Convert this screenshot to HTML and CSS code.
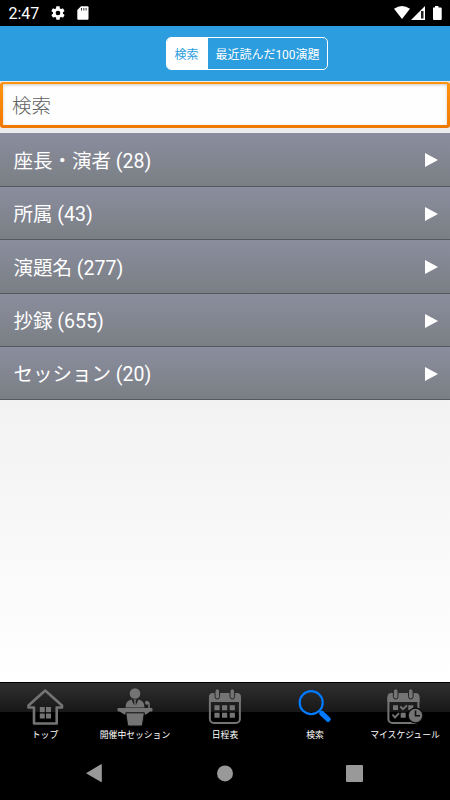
FILE: index.html
```html
<!DOCTYPE html>
<html lang="ja">
<head>
<meta charset="utf-8">
<title>検索</title>
<link rel="stylesheet" href="styles.css">
</head>
<body>
<div class="status">
  <span class="clock">2:47</span>
  <svg class="gear" width="16" height="16" viewBox="0 0 24 24"><path fill="#fff" fill-rule="evenodd" d="M19.4 13a7.5 7.5 0 0 0 0-2l2.1-1.6c.2-.2.3-.4.1-.7l-2-3.4c-.1-.2-.4-.3-.6-.2l-2.5 1a7 7 0 0 0-1.7-1l-.4-2.7c0-.2-.2-.4-.5-.4h-4c-.2 0-.4.2-.5.4L9 5.100a7 7 0 0 0-1.700 1l-2.500-1c-.2-.1-.5 0-.6.2l-2 3.400c-.1.3-.1.5.1.7L4.500 11a7.500 7.500 0 0 0 0 2l-2.100 1.600c-.2.2-.3.4-.1.7l2 3.400c.1.2.4.3.6.2l2.500-1a7 7 0 0 0 1.700 1l.4 2.700c0 .2.2.4.5.4h4c.2 0 .4-.2.5-.4l.4-2.700a7 7 0 0 0 1.700-1l2.500 1c.2.1.5 0 .6-.2l2-3.400c.1-.3.1-.5-.1-.7zM12 15.500a3.500 3.500 0 1 1 0-7 3.500 3.500 0 0 1 0 7z"/></svg>
  <svg class="card" width="12" height="14" viewBox="0 0 12 14"><path fill="#fff" d="M4 .2h6.500Q11.500.2 11.500 1.200v11.500q0 1-1 1h-9.200q-1 0-1-1V4z"/><path stroke="#000" stroke-width=".8" d="M4.500 2v2.500M6.800 2v2.500M9.100 2v2.500"/></svg>
  <svg class="signals" width="50" height="16" viewBox="0 0 50 16"><path fill="#fff" d="M0 3.800Q8 -1.800 16 3.800L8 14z"/><path fill="#fff" d="M31 1v14H17z"/><path fill="#222" d="M27 6h2.500v7.500H27z"/><path fill="#fff" d="M39 2.500h2V1h3.500v1.500h2.200q1 0 1 1V14q0 1-1 1H40q-1 0-1-1z"/></svg>
</div>
<header class="header">
  <div class="segments">
    <span class="segment selected">検索</span>
    <span class="segment">最近読んだ100演題</span>
  </div>
</header>
<div class="search"><div class="frame"><input type="text" placeholder="検索" aria-label="検索"></div></div>
<ul class="list">
  <li><span>座長・演者 (28)</span><i class="arrow"></i></li>
  <li><span>所属 (43)</span><i class="arrow"></i></li>
  <li><span>演題名 (277)</span><i class="arrow"></i></li>
  <li><span>抄録 (655)</span><i class="arrow"></i></li>
  <li><span>セッション (20)</span><i class="arrow"></i></li>
</ul>
<main class="blank"></main>
<nav class="tabs">
  <a class="tab">
    <svg width="40" height="40" viewBox="0 0 40 40"><path fill="none" stroke="#747474" stroke-width="2.600" stroke-linejoin="round" d="M20.200 3.500L3.500 18.500V20.500H9V36.500H31.700V20.500H37V18.500z"/><path fill="#747474" d="M14.800 20h5v5.300h-5zM21 20h5v5.300h-5zM14.800 26.500h5v5h-5zM21 26.500h5v5h-5z"/></svg>
    <span>トップ</span>
  </a>
  <a class="tab">
    <svg width="40" height="40" viewBox="0 0 40 40"><g fill="#747474"><circle cx="20" cy="6.500" r="5.300"/><path d="M10.500 20.500q0-7 6-8l2.700 6 .2-4.500-1-1.500h3.200l-1 1.500.2 4.500 2.700-6q6 1 6 8z"/><path d="M2.500 22q0-1 1-1h33q1 0 1 1v1.500q0 1-1 1h-1.500L31 27.500H9.500L4.500 24.500h-1q-1 0-1-1z"/><path stroke="#0c0c0c" stroke-width="1" d="M10.800 25.800h18.600L27.500 37.500q-.2 1.500-1.500 1.500H14q-1.300 0-1.500-1.500z"/></g><path fill="none" stroke="#747474" stroke-width="1.500" d="M34 21v-4q0-2-2.500-2"/><ellipse cx="31.800" cy="15.800" rx="1.800" ry="2" fill="#747474"/></svg>
    <span>開催中セッション</span>
  </a>
  <a class="tab">
    <svg width="40" height="40" viewBox="0 0 40 40"><rect x="4.900" y="7" width="30" height="29" rx="4" fill="none" stroke="#747474" stroke-width="2"/><path fill="#747474" d="M4 15V10q0-4 4-4h24q4 0 4 4v5zM9.400 18.200h5.200v5H9.400zM17 18.200h5.200v5H17zM24.700 18.200h5.200v5h-5.200zM9.400 25.700h5.200v5H9.400zM17 25.700h5.200v5H17zM24.700 25.700h5.200v5h-5.200z"/><g fill="#747474" stroke="#242424" stroke-width="1"><rect x="10" y="1.800" width="4.600" height="10.200" rx="2.300"/><rect x="25" y="1.800" width="4.600" height="10.200" rx="2.300"/></g></svg>
    <span>日程表</span>
  </a>
  <a class="tab">
    <svg width="40" height="40" viewBox="0 0 40 40"><circle cx="16.200" cy="15.700" r="11.500" fill="none" stroke="#007aff" stroke-width="2.200"/><path stroke="#007aff" stroke-width="2" d="M24 23.500l3 3"/><path stroke="#007aff" stroke-width="4" stroke-linejoin="round" fill="#007aff" d="M27 25.800l6.800 6.400-.8.800-6.800-6.400z"/></svg>
    <span>検索</span>
  </a>
  <a class="tab">
    <svg width="40" height="40" viewBox="0 0 40 40"><rect x="3.400" y="7" width="30" height="29" rx="4" fill="none" stroke="#747474" stroke-width="2"/><path fill="#747474" d="M2.500 15V10q0-4 4-4h24q4 0 4 4v5zM8 18.200h5v4.800H8zM23.300 18.200h5v4.800h-5zM15.700 25.700h5v5h-5z"/><g fill="#747474" stroke="#242424" stroke-width="1"><rect x="8.400" y="1.800" width="4.600" height="10.200" rx="2.300"/><rect x="23.500" y="1.800" width="4.600" height="10.200" rx="2.300"/></g><path fill="none" stroke="#747474" stroke-width="1.900" d="M15.300 19.500l2.700 2.700 4-3.800M7.500 27.500l2.500 3 4-4.300"/><circle cx="30.500" cy="28.500" r="7.400" fill="#747474" stroke="#0a0a0a" stroke-width="1.300"/><path fill="none" stroke="#111" stroke-width="1.600" d="M30.500 23.500v5.300h4.500"/></svg>
    <span>マイスケジュール</span>
  </a>
</nav>
<div class="system">
  <svg width="450" height="54" viewBox="0 0 450 54"><g fill="#999"><path d="M86 27.200L101 18.300q.8-.4.800.5v16.800q0 .9-.8.500z"/><circle cx="225" cy="27.400" r="8"/><rect x="346" y="19" width="17" height="17" rx="1"/></g></svg>
</div>
</body>
</html>
```
FILE: styles.css
```css
* { box-sizing: border-box; }
body {
  margin: 0;
  height: 800px;
  overflow: hidden;
  display: flex;
  flex-direction: column;
  background: #000;
  font-family: Roboto, "Noto Sans CJK JP", sans-serif;
}
.status {
  height: 26px;
  flex: none;
  display: flex;
  align-items: center;
  padding: 0 0 0 8.500px;
  color: #fff;
  font-size: 16px;
}
.clock { width: 41.500px; padding-top: 1px; }
.gear { margin-right: 11px; }
.signals { margin-left: auto; margin-right: 6px; }
.header {
  height: 55px;
  flex: none;
  display: flex;
  justify-content: center;
  padding: 11px 0 0 44px;
  background: #2c9dde;
}
.segments {
  display: flex;
  width: 162px;
  height: 33px;
  border: 1px solid #fff;
  border-radius: 5px;
  overflow: hidden;
  color: #fff;
  font-size: 12px;
}
.segment {
  flex: 1;
  display: flex;
  align-items: center;
  justify-content: center;
  white-space: nowrap;
}
.segment.selected {
  flex: 0 0 41px;
  padding-right: 2px;
  background: #fff;
  color: #2c9dde;
}
.search { height: 52px; flex: none; padding-top: 1px; background: #ececec; }
.frame {
  height: 46px;
  padding: 2px 3px 3px;
  border-radius: 3px;
  background: linear-gradient(#ff9412, #f17800);
}
.frame input {
  display: block;
  width: 100%;
  height: 41px;
  border: 0;
  outline: 0;
  padding: 3px 9px 0;
  background: #fefefe;
  box-shadow: inset 0 1px 3px #cfc8c0;
  font: 300 19.500px Roboto, "Noto Sans CJK JP", sans-serif;
}
.frame input::placeholder { color: #606060; }
.list {
  flex: none;
  margin: 0;
  padding: 0;
  list-style: none;
  display: grid;
  grid-template-rows: 54px 53px 54px 53px 53px;
}
.list li {
  display: flex;
  align-items: center;
  justify-content: space-between;
  padding: 1px 12px 0 13.500px;
  border-bottom: 1px solid #55595e;
  background: linear-gradient(#8b8d9e, #7a7f84);
  color: #fff;
  font-size: 19.500px;
  line-height: 28px;
}
.list span { padding-top: 3px; }
.arrow {
  border-left: 13px solid #fff;
  border-top: 7.500px solid transparent;
  border-bottom: 7.500px solid transparent;
}
.blank { flex: 1; background: linear-gradient(#f2f2f2, #fff); }
.tabs {
  height: 64px;
  flex: none;
  display: grid;
  grid-template-columns: repeat(5, 1fr);
  border-top: 1px solid #000;
  background: linear-gradient(#303030, #171717 29px, #000 29px);
}
.tab {
  display: flex;
  flex-direction: column;
  align-items: center;
  padding-top: 4px;
  color: #fff;
  font-size: 8.800px;
  font-weight: 400;
  line-height: 16px;
  white-space: nowrap;
}
.tab svg { flex: none; }
.system { height: 54px; flex: none; }
.system svg { display: block; }
```
